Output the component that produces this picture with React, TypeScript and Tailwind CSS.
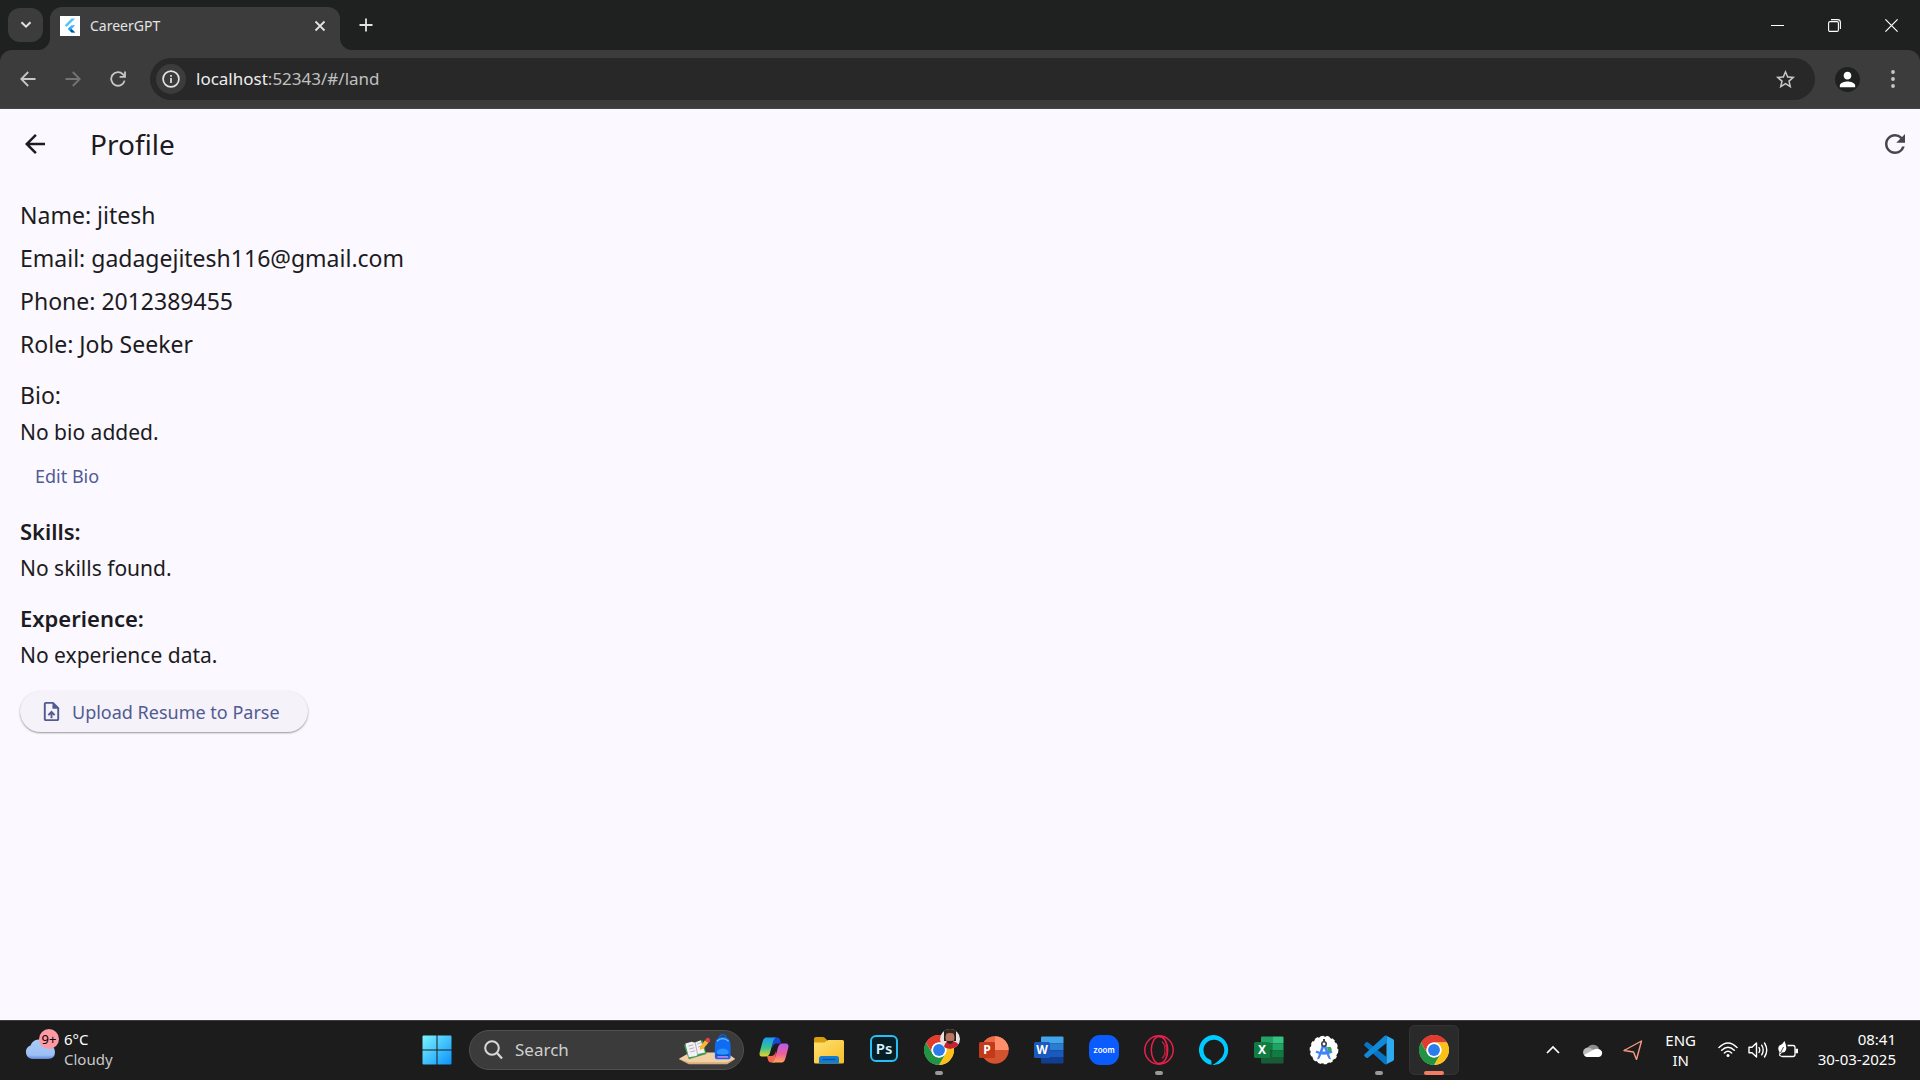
import type { ReactNode } from 'react';
import { MdArrowBack, MdPerson, MdRefresh, MdStarBorder, MdUploadFile } from 'react-icons/md';

const details = [
  { label: 'Name', value: 'jitesh' },
  { label: 'Email', value: 'gadagejitesh116@gmail.com' },
  { label: 'Phone', value: '2012389455' },
  { label: 'Role', value: 'Job Seeker' },
];

function FlutterIcon() {
  return (
    <svg width="20" height="20" viewBox="0 0 20 20" aria-hidden>
      <rect width="20" height="20" fill="#fff" />
      <path d="M11.5 2.5h3.7L6.6 11 4.8 9.2z" fill="#54c5f8" />
      <path d="M11.5 9.2h3.7L11.6 12.9l3.6 3.7h-3.7l-3.6-3.7z" fill="#40b6f5" />
      <path d="M9.8 14.7l1.8-1.8 3.6 3.7h-3.7z" fill="#01579b" />
      <path d="M7.9 12.9l1.8-1.8 1.9 1.8-1.8 1.8z" fill="#29a3ee" />
    </svg>
  );
}

function TabStrip() {
  return (
    <div className="flex h-[50px] items-end bg-[#1f2120] pl-2 text-[#e3e3e3]">
      <button type="button" aria-label="Search tabs" className="mb-2 flex h-[34px] w-[35px] items-center justify-center rounded-xl bg-[#3c3c3c]">
        <svg width="12" height="8" viewBox="0 0 12 8" fill="none" aria-hidden>
          <path d="M1.5 1.2 6 5.7l4.5-4.5" stroke="currentColor" strokeWidth="2" />
        </svg>
      </button>
      <div className="relative ml-[7px] flex h-[43px] w-[290px] items-center rounded-t-xl bg-[#3c3c3c] pr-2 pb-4 pl-[10px] pt-[10px]">
        <svg className="absolute bottom-0 -left-3 text-[#3c3c3c]" width="12" height="12" viewBox="0 0 12 12" aria-hidden>
          <path d="M12 0v12H0A12 12 0 0 0 12 0z" fill="currentColor" />
        </svg>
        <svg className="absolute -right-3 bottom-0 text-[#3c3c3c]" width="12" height="12" viewBox="0 0 12 12" aria-hidden>
          <path d="M0 0v12h12A12 12 0 0 1 0 0z" fill="currentColor" />
        </svg>
        <FlutterIcon />
        <span className="ml-[10px] flex-1 text-[14px] leading-5">CareerGPT</span>
        <button type="button" aria-label="Close tab" className="flex h-6 w-6 items-center justify-center">
          <svg width="12" height="12" viewBox="0 0 12 12" fill="none" aria-hidden>
            <path d="M1.5 1.5l9 9M10.5 1.5l-9 9" stroke="currentColor" strokeWidth="1.8" />
          </svg>
        </button>
      </div>
      <button type="button" aria-label="New tab" className="mb-[15px] ml-[14px] flex h-5 w-6 items-center justify-center">
        <svg width="14" height="14" viewBox="0 0 14 14" fill="none" aria-hidden>
          <path d="M7 .5v13M.5 7h13" stroke="currentColor" strokeWidth="1.8" />
        </svg>
      </button>
      <div className="ml-auto flex h-full text-white">
        <button type="button" aria-label="Minimize" className="flex w-[57px] items-center justify-center">
          <svg width="13" height="13" viewBox="0 0 13 13" aria-hidden>
            <path d="M0 6h13v1H0z" fill="currentColor" />
          </svg>
        </button>
        <button type="button" aria-label="Restore" className="flex w-[57px] items-center justify-center">
          <svg width="13" height="13" viewBox="0 0 13 13" fill="none" stroke="currentColor" strokeWidth="1.1" aria-hidden>
            <rect x=".6" y="2.6" width="9.8" height="9.8" rx="1.4" />
            <path d="M3 .6h6.6a2.8 2.8 0 0 1 2.8 2.8V10" />
          </svg>
        </button>
        <button type="button" aria-label="Close" className="flex w-[57px] items-center justify-center">
          <svg width="13" height="13" viewBox="0 0 13 13" fill="none" aria-hidden>
            <path d="M.4.4l12.2 12.2M12.6.4L.4 12.6" stroke="currentColor" strokeWidth="1.2" />
          </svg>
        </button>
      </div>
    </div>
  );
}

function Toolbar() {
  return (
    <div className="bg-[#1f2120]">
      <div className="flex h-[59px] items-center rounded-t-xl border-b border-[#484848] bg-[#3c3c3c] pr-4 pl-[5px] text-[#c7c7c7]">
        <button type="button" aria-label="Back" className="flex h-9 w-[45px] items-center justify-center">
          <svg width="16" height="16" viewBox="0 0 16 16" fill="none" stroke="currentColor" strokeWidth="1.8" aria-hidden>
            <path d="M15.5 8H2M8.2 1 1.3 8l6.9 7" />
          </svg>
        </button>
        <button type="button" aria-label="Forward" className="flex h-9 w-[45px] items-center justify-center text-[#747474]">
          <svg width="16" height="16" viewBox="0 0 16 16" fill="none" stroke="currentColor" strokeWidth="1.8" aria-hidden>
            <path d="M.5 8H14M7.8 1l6.9 7-6.9 7" />
          </svg>
        </button>
        <button type="button" aria-label="Reload" className="flex h-9 w-[45px] items-center justify-center">
          <svg width="16" height="16" viewBox="0 0 16 16" fill="none" stroke="currentColor" strokeWidth="1.8" aria-hidden>
            <path d="M14.6 9.6A6.8 6.8 0 1 1 13 3.3l1.8 1.9" />
            <path d="M15 .5v5.3H9.6" />
          </svg>
        </button>
        <div className="ml-[10px] flex h-[42px] flex-1 items-center rounded-full bg-[#282828] pr-[18px] pl-[6px]">
          <button type="button" aria-label="View site information" className="flex h-[30px] w-[30px] items-center justify-center rounded-full bg-[#3c3c3c] text-[#e3e3e3]">
            <svg width="18" height="18" viewBox="0 0 18 18" fill="none" aria-hidden>
              <circle cx="9" cy="9" r="7.9" stroke="currentColor" strokeWidth="1.7" />
              <path d="M9 8v5M9 5v1.8" stroke="currentColor" strokeWidth="1.7" />
            </svg>
          </button>
          <div className="ml-[10px] flex-1 text-[17px] leading-6 text-[#c0c0c0]">
            <span className="text-[#ededed]">localhost</span>:52343/#/land
          </div>
          <button type="button" aria-label="Bookmark this tab">
            <MdStarBorder size={23} />
          </button>
        </div>
        <button type="button" aria-label="Profile" className="ml-5 flex h-[25px] w-[25px] items-center justify-center rounded-full bg-[#1f2120] text-white">
          <MdPerson size={23} />
        </button>
        <button type="button" aria-label="Menu" className="ml-[22px] flex h-9 w-[22px] items-center justify-center">
          <svg width="4" height="18" viewBox="0 0 4 18" fill="currentColor" aria-hidden>
            <circle cx="2" cy="2" r="1.9" />
            <circle cx="2" cy="9" r="1.9" />
            <circle cx="2" cy="16" r="1.9" />
          </svg>
        </button>
      </div>
    </div>
  );
}

function Section({ title, text }: { title: string; text: string }) {
  return (
    <section className="mt-[18px]">
      <h2 className="text-[22px] leading-[34px] font-semibold">{title}</h2>
      <p className="mt-[5px] text-[21px] leading-[30px]">{text}</p>
    </section>
  );
}

function ProfilePage() {
  return (
    <main className="flex-1 bg-[#fbf8ff] text-[#1b1b21]">
      <header className="flex h-[70px] items-center pr-[10px] pl-5">
        <button type="button" aria-label="Back">
          <MdArrowBack size={30} />
        </button>
        <h1 className="ml-10 flex-1 text-[28px] leading-9">Profile</h1>
        <button type="button" aria-label="Refresh" className="text-[#46464f]">
          <MdRefresh size={30} />
        </button>
      </header>
      <div className="px-5 pt-[19px] pb-5">
        <div className="flex flex-col gap-[9px] text-[23px] leading-[34px]">
          {details.map((d) => (
            <p key={d.label}>
              {d.label}: {d.value}
            </p>
          ))}
        </div>
        <section className="mt-[17px]">
          <h2 className="text-[23px] leading-[34px]">Bio:</h2>
          <p className="mt-[5px] text-[21px] leading-[30px]">No bio added.</p>
          <button type="button" className="mt-2 block h-[41px] px-[15px] text-[18px] leading-6 text-[#505b92]">
            Edit Bio
          </button>
        </section>
        <Section title="Skills:" text="No skills found." />
        <Section title="Experience:" text="No experience data." />
        <button
          type="button"
          className="mt-[21px] flex h-[41px] items-center gap-[9px] rounded-full bg-[#f5f2fa] pr-7 pl-5 text-[18px] leading-6 text-[#505b92] shadow-[0_1px_2px_rgba(0,0,0,0.4)]"
        >
          <MdUploadFile size={23} />
          Upload Resume to Parse
        </button>
      </div>
    </main>
  );
}

function WindowsIcon() {
  return (
    <svg width="30" height="30" viewBox="0 0 30 30" aria-hidden>
      <defs>
        <linearGradient id="win" x1="0" y1="0" x2="1" y2="1">
          <stop offset="0" stopColor="#7df3ff" />
          <stop offset="1" stopColor="#0a93fb" />
        </linearGradient>
      </defs>
      <path d="M1.5.5h13v14h-14v-13a1 1 0 0 1 1-1zM15.5.5h13a1 1 0 0 1 1 1v13h-14zM.5 15.5h14v14h-13a1 1 0 0 1-1-1zM15.5 15.5h14v13a1 1 0 0 1-1 1h-13z" fill="url(#win)" />
    </svg>
  );
}

function StudyArt() {
  return (
    <svg width="57" height="32" viewBox="0 0 58 32" aria-hidden>
      <path d="M0 25.500 11 19h37l9 6.500-8 5H10z" fill="#d9ae7e" />
      <path d="M0 25 11 18.500h37l9 6.500-8 3.500H10z" fill="#f2cfa4" />
      <path d="M5 11l19-5 4 14-18 5.500z" fill="#3f9a55" />
      <path d="M6.500 9.500 13 7.500l3 1 6-2.500 4.500 12.500-7 1.500-2 2-7.500 1.500z" fill="#f4f1f5" />
      <path d="M16.500 8.500 19 21M9.500 12l5-1.300M10.500 15l5-1.300M11.500 18l5-1.300M18.500 10l4-1.500M19.500 13l4-1.500" stroke="#a9a7b2" strokeWidth=".9" />
      <path d="m21.500 12.500 5-6.500 3.500 2.500-5 6-4 1.500z" fill="#f7b731" />
      <path d="m26.500 6 2-2.500q3.500 0 3 3.500L30 8.500z" fill="#e8414d" />
      <path d="M41 4.500q0-4 3.500-4t3.500 4" fill="none" stroke="#1260c8" strokeWidth="1.500" />
      <path d="M36.500 12q0-9.500 8-9.500t8 9.500v11q0 2.500-3 2.500h-10q-3 0-3-2.500z" fill="#0f6cf0" />
      <path d="M38.500 7q6-5 12 0" fill="none" stroke="#6ec2ff" strokeWidth="1.300" />
      <path d="M38 20q0-5 6.500-5t6.500 5v2q0 1.500-2 1.500h-9q-2 0-2-1.500z" fill="#0b50cc" />
      <path d="M38.500 17q6-5 12 0v3q-6 1.500-12 0z" fill="#2794ff" />
      <path d="M39 23h11" stroke="#ca7df5" strokeWidth="1.700" />
    </svg>
  );
}

function CopilotIcon() {
  return (
    <svg width="30" height="28" viewBox="0 0 30 28" aria-hidden>
      <defs>
        <linearGradient id="copA" x1="0" y1="0" x2="0" y2="1">
          <stop offset="0" stopColor="#1b9bf5" />
          <stop offset=".55" stopColor="#38c48f" />
          <stop offset="1" stopColor="#f2cf2b" />
        </linearGradient>
        <linearGradient id="copB" x1="0" y1="0" x2="0" y2="1">
          <stop offset="0" stopColor="#b35cf2" />
          <stop offset=".55" stopColor="#ee5f97" />
          <stop offset="1" stopColor="#ffa65c" />
        </linearGradient>
      </defs>
      <path d="M14 1.500h3.500c3.500 0 3.500 2 4.500 6h-4c-3 0-4 2-5 5z" fill="#1748d8" />
      <path d="M16 26.500h-4c-3 0-3-3-4-6.500h4c3 0 4-2 5-5z" fill="#f26a4d" />
      <path d="M8 1.500h10c-3 0-3.500 2.500-4.300 5.500l-2.500 9c-.8 3-2 4.500-4.700 4.500H3.800c-3 0-3.800-1.500-3-4.500l2.500-9.500C4.200 3.500 5 1.500 8 1.500z" fill="url(#copA)" />
      <path d="M22 26.500H12c3 0 3.500-2.500 4.300-5.500l2.500-9c.8-3 2-4.500 4.700-4.500h2.700c3 0 3.800 1.500 3 4.500l-2.500 9.500c-.9 3-1.700 5-4.700 5z" fill="url(#copB)" />
    </svg>
  );
}

function ExplorerIcon() {
  return (
    <svg width="30" height="28" viewBox="0 0 30 28" aria-hidden>
      <defs>
        <linearGradient id="folder" x1="0" y1="0" x2="1" y2="1">
          <stop offset="0" stopColor="#ffe173" />
          <stop offset="1" stopColor="#f9bd27" />
        </linearGradient>
      </defs>
      <path d="M0 3q0-2 2-2h7q1.500 0 2.500 1.500L13 4v8H0z" fill="#dc9d0c" />
      <path d="M0 6.500h10.500L14 4h14.500Q30 4 30 5.500V26q0 1.500-1.500 1.500h-27Q0 27.500 0 26z" fill="url(#folder)" />
      <path d="M5 27.500v-5Q5 20 7.500 20h15q2.500 0 2.500 2.500v5z" fill="#147bd3" />
      <path d="M8.500 23.500h13" stroke="#07529e" strokeWidth="1.200" />
    </svg>
  );
}

function ChromeIcon() {
  return (
    <svg width="30" height="30" viewBox="0 0 48 48" aria-hidden>
      <circle cx="24" cy="24" r="23.500" fill="#fff" />
      <path d="M3.200 12A24 24 0 0 1 44.800 12H24a12 12 0 0 0-10.400 18z" fill="#e33b2e" />
      <path d="M44.800 12A24 24 0 0 1 24 48l10.400-18A12 12 0 0 0 34.400 18 12 12 0 0 0 24 12z" fill="#fbc116" />
      <path d="M24 48A24 24 0 0 1 3.200 12l10.400 18A12 12 0 0 0 34.400 30z" fill="#229342" />
      <circle cx="24" cy="24" r="12" fill="#fff" />
      <circle cx="24" cy="24" r="9.500" fill="#2b7de9" />
    </svg>
  );
}

function ChromeProfileIcon() {
  return (
    <span className="relative">
      <ChromeIcon />
      <svg className="absolute -top-[6px] left-4" width="20" height="20" viewBox="0 0 20 20" aria-hidden>
        <defs>
          <clipPath id="face">
            <circle cx="10" cy="10" r="10" />
          </clipPath>
        </defs>
        <g clipPath="url(#face)">
          <path fill="#e8e2e2" d="M0 0h20v20H0z" />
          <path d="M4 0h12v12H4z" fill="#251c1c" />
          <path d="M4 20q0-8 6-8t8 3v5z" fill="#c8202c" />
          <ellipse cx="10" cy="8.500" rx="4.500" ry="6.500" fill="#b87763" />
          <path d="M5.500 5q0-4.500 4.500-4.500T15 5q-5-2-9.500 0zM6.500 11.500q3.500 1 7 0-.5 3.500-3.500 3.500t-3.500-3.500z" fill="#3a2420" />
        </g>
      </svg>
    </span>
  );
}

function PhotoshopIcon() {
  return (
    <span className="mb-[2px] flex h-[27px] w-7 items-center justify-center rounded-md border-2 border-[#26c0f5] bg-[#061e26] pb-[2px] text-[15px] leading-5 font-semibold text-[#d8f3fd]">
      Ps
    </span>
  );
}

function PowerPointIcon() {
  return (
    <span className="relative flex">
      <svg width="30" height="28" viewBox="0 0 30 28" aria-hidden>
        <circle cx="16" cy="14" r="13.700" fill="#d35230" />
        <path d="M16 .3A13.700 13.700 0 0 0 2.300 14H16z" fill="#ed6c47" />
        <path d="M16 .3A13.700 13.700 0 0 1 29.700 14H16z" fill="#ff8f6b" />
        <rect x="0" y="6" width="16" height="16" rx="1.500" fill="#c13b1b" />
      </svg>
      <span className="absolute top-[6px] left-0 w-4 text-center text-[12px] leading-4 font-bold text-white">P</span>
    </span>
  );
}

function WordIcon() {
  return (
    <span className="relative flex">
      <svg width="30" height="28" viewBox="0 0 30 28" aria-hidden>
        <path d="M7 1.500Q7 .5 8 .5h20.500q1 0 1 1V7.500H7z" fill="#41a5ee" />
        <path d="M7 7.500h22.500v6.700H7z" fill="#2b7cd3" />
        <path d="M7 14.200h22.500V21H7z" fill="#185abd" />
        <path d="M7 21h22.500v5.500q0 1-1 1H8q-1 0-1-1z" fill="#103f91" />
        <rect x="0" y="6" width="16" height="16" rx="1.500" fill="#185abd" />
      </svg>
      <span className="absolute top-[6px] left-0 w-4 text-center text-[12px] leading-4 font-bold text-white">W</span>
    </span>
  );
}

function ExcelIcon() {
  return (
    <span className="relative flex">
      <svg width="30" height="28" viewBox="0 0 30 28" aria-hidden>
        <path d="M7 1.500Q7 .5 8 .5h10.300v7H7z" fill="#21a366" />
        <path d="M18.300.5h10.200q1 0 1 1v6H18.300z" fill="#33c481" />
        <path d="M7 7.500h11.300v6.700H7z" fill="#107c41" />
        <path d="M18.300 7.500h11.200v6.700H18.300z" fill="#21a366" />
        <path d="M7 14.200h22.500v12.300q0 1-1 1H8q-1 0-1-1z" fill="#185c37" />
        <path d="M18.300 14.200h11.200V21H18.300z" fill="#107c41" />
        <rect x="0" y="6" width="16" height="16" rx="1.500" fill="#107c41" />
      </svg>
      <span className="absolute top-[6px] left-0 w-4 text-center text-[12px] leading-4 font-bold text-white">X</span>
    </span>
  );
}

function ZoomIcon() {
  return (
    <span className="flex h-[30px] w-[30px] items-center justify-center rounded-[11px] bg-[#0b5cff] font-['Inter'] text-[8px] leading-3 font-semibold text-white">
      zoom
    </span>
  );
}

function OperaIcon() {
  return (
    <svg width="30" height="30" viewBox="0 0 30 30" fill="none" stroke="#e8204b" aria-hidden>
      <circle cx="15" cy="15" r="14.200" strokeWidth="1.500" />
      <ellipse cx="15.500" cy="15" rx="8.200" ry="13.700" strokeWidth="1.500" />
      <path d="M13 1.500q10 0 10.500 13.500T13 28.500" strokeWidth="1" />
      <path d="M18 6.500q4.500 3 4.500 8.500T18 23.500q3-3 3-8.500t-3-8.500z" strokeWidth=".8" />
    </svg>
  );
}

function AlexaIcon() {
  return (
    <svg width="30" height="30" viewBox="0 0 30 30" aria-hidden>
      <path
        fillRule="evenodd"
        d="M15 0a15 15 0 0 0-2.500 29.800v-3c0-1.300-.7-1.700-1.800-2.200A10.500 10.500 0 0 1 4.500 15C4.500 9.200 9.200 4.800 15 4.800S25.300 9.500 25.300 15c0 7-6 11.500-12 15A15 15 0 1 0 15 0z"
        fill="#00caff"
      />
    </svg>
  );
}

function AndroidStudioIcon() {
  return (
    <svg width="30" height="30" viewBox="0 0 30 30" aria-hidden>
      <circle cx="15" cy="15" r="13.600" fill="#fff" stroke="#fff" strokeWidth="1.500" strokeDasharray="3.500 2.500" />
      <path d="M18 12h3.500q2 2 .5 5l-3 .5z" fill="#34a853" />
      <path d="M13 10 8 24.500l2.500-1L12.500 19h5l2 4.500 2.500 1L17 10zM15 12.500l1.500 4h-3z" fill="#4285f4" fillRule="evenodd" />
      <path d="M7 16.500q8 4.500 16 0" fill="none" stroke="#4285f4" strokeWidth="2.200" />
      <path d="M14 4h2v3h-2z" fill="#3c4043" />
      <circle cx="15" cy="9" r="2.200" fill="#fff" stroke="#3c4043" strokeWidth="1.600" />
    </svg>
  );
}

function VsCodeIcon() {
  return (
    <svg width="30" height="30" viewBox="0 0 100 100" aria-hidden>
      <path d="M2 29 7 24q3-2 6 0l62 49v25q-5 1-8-2L2 36q-3-3 0-7z" fill="#0a74c4" />
      <path d="M2 71 7 76q3 2 6 0l62-49V2q-5-1-8 2L2 64q-3 3 0 7z" fill="#1089d8" />
      <path d="m71 99 25-12q4-2 4-6V19q0-4-4-6L71 1q4 1 4 6v86q0 5-4 6z" fill="#2cabf3" />
    </svg>
  );
}

type AppState = 'idle' | 'open' | 'active';

const pinned: { name: string; icon: ReactNode; state: AppState }[] = [
  { name: 'Copilot', icon: <CopilotIcon />, state: 'idle' },
  { name: 'File Explorer', icon: <ExplorerIcon />, state: 'idle' },
  { name: 'Photoshop', icon: <PhotoshopIcon />, state: 'idle' },
  { name: 'Chrome profile', icon: <ChromeProfileIcon />, state: 'open' },
  { name: 'PowerPoint', icon: <PowerPointIcon />, state: 'idle' },
  { name: 'Word', icon: <WordIcon />, state: 'idle' },
  { name: 'Zoom', icon: <ZoomIcon />, state: 'idle' },
  { name: 'Opera GX', icon: <OperaIcon />, state: 'open' },
  { name: 'Alexa', icon: <AlexaIcon />, state: 'idle' },
  { name: 'Excel', icon: <ExcelIcon />, state: 'idle' },
  { name: 'Android Studio', icon: <AndroidStudioIcon />, state: 'idle' },
  { name: 'Visual Studio Code', icon: <VsCodeIcon />, state: 'open' },
  { name: 'Chrome', icon: <ChromeIcon />, state: 'active' },
];

const cellStyles: Record<AppState, string> = {
  idle: '',
  open: '',
  active: 'rounded-md bg-[#2a2a2a] ring-1 ring-inset ring-[#333333]',
};

const markStyles: Record<AppState, string> = {
  idle: 'hidden',
  open: 'w-2 bg-[#999999]',
  active: 'w-5 bg-[#f47c62]',
};

function Weather() {
  return (
    <button type="button" className="flex items-center pl-[25px] text-left text-[15px] leading-5 text-white">
      <span className="relative flex h-10 w-[30px] items-end pb-[11px]">
        <svg width="30" height="20" viewBox="0 0 30 20" aria-hidden>
          <defs>
            <linearGradient id="cloud" x1="0" y1="0" x2="0" y2="1">
              <stop offset="0" stopColor="#a8cbf8" />
              <stop offset=".8" stopColor="#9dbff5" />
              <stop offset="1" stopColor="#5d87d8" />
            </linearGradient>
          </defs>
          <path d="M7 20a7 7 0 0 1-1.500-13.500A9 9 0 0 1 22 5.500 7.500 7.500 0 0 1 30 13q0 7-7 7z" fill="url(#cloud)" />
        </svg>
        <span className="absolute -top-[1px] left-[14px] flex h-5 w-5 items-center justify-center rounded-full bg-[#ff99a4] text-[13px] leading-4 text-black">
          9+
        </span>
      </span>
      <span className="ml-[9px] pb-[2px]">
        <span className="block">6°C</span>
        <span className="block text-[#c8c8c8]">Cloudy</span>
      </span>
    </button>
  );
}

function Tray() {
  return (
    <div className="ml-auto flex items-center pr-6 text-white">
      <button type="button" aria-label="Show hidden icons" className="flex w-10 justify-center">
        <svg width="14" height="9" viewBox="0 0 14 9" fill="none" aria-hidden>
          <path d="M1 8l6-6 6 6" stroke="currentColor" strokeWidth="1.700" />
        </svg>
      </button>
      <button type="button" aria-label="OneDrive" className="flex w-10 justify-center">
        <svg width="20" height="14" viewBox="0 0 20 14" aria-hidden>
          <path d="M4 6a6.500 6.500 0 0 1 12-.5L10 9z" fill="#8d8d8d" />
          <path d="M0 9.500a5 5 0 0 1 8-4l8 4-5 3.500H4A4 4 0 0 1 0 9.500z" fill="#bdbdbd" />
          <path d="M1 12l10-5.500q3-1.500 6 0A4 4 0 0 1 16 14H4q-2 0-3-2z" fill="#fff" />
        </svg>
      </button>
      <button type="button" aria-label="Location" className="flex w-10 justify-center">
        <svg width="20" height="20" viewBox="0 0 20 20" fill="none" aria-hidden>
          <path d="M18.500 1 1 10.500l9.500 1.500 3 7.500z" stroke="#f59a80" strokeWidth="1.400" strokeLinejoin="round" />
        </svg>
      </button>
      <button type="button" className="w-14 text-center text-[15px] leading-5">
        <span className="block">ENG</span>
        <span className="block">IN</span>
      </button>
      <button type="button" aria-label="Network, volume and battery" className="ml-[9px] flex w-20 items-center gap-[10px]">
        <svg width="20" height="16" viewBox="0 0 20 16" fill="none" stroke="currentColor" strokeWidth="1.500" strokeLinecap="round" aria-hidden>
          <path d="M1 5.500q9-9 18 0M3.700 8.300q6.300-6.200 12.600 0M6.400 11q3.600-3.500 7.200 0" />
          <circle cx="10" cy="13.500" r="1.500" fill="currentColor" stroke="none" />
        </svg>
        <svg width="20" height="18" viewBox="0 0 20 18" fill="none" stroke="currentColor" strokeWidth="1.400" strokeLinecap="round" aria-hidden>
          <path d="M1 6.300h3L8.500 2v14L4 11.700H1z" strokeLinejoin="round" />
          <path d="M11 6.500q1.500 2.500 0 5M13.700 4.200q3 4.800 0 9.600M16.500 2q4.500 7 0 14" />
        </svg>
        <svg width="20" height="18" viewBox="0 0 20 18" fill="none" stroke="currentColor" strokeWidth="1.300" aria-hidden>
          <path d="M9.500 4.500H15q2 0 2 2v7q0 2-2 2H4.500q-2 0-3-1.500" />
          <path d="M18 8.500h1.500v3H18z" fill="currentColor" />
          <path d="M6.500 0q2.500 5 1.500 9-1 3-4 2.500L1 15l.5-4Q-1 7 1.500 4.500 5 3 6.500 0z" fill="currentColor" stroke="none" />
          <path d="M5.500 6 2.500 12" stroke="#1c1c1c" strokeWidth=".8" />
        </svg>
      </button>
      <button type="button" className="ml-5 pb-[2px] text-right text-[15px] leading-5">
        <span className="block">08:41</span>
        <span className="block">30-03-2025</span>
      </button>
    </div>
  );
}

function Taskbar() {
  return (
    <footer className="flex h-[60px] items-stretch border-t border-[#3d3d3d] bg-[#1c1c1c] pb-[2px]">
      <div className="flex w-[412px] items-center">
        <Weather />
      </div>
      <div className="flex items-center gap-[5px]">
        <button type="button" aria-label="Start" className="flex h-[50px] w-[50px] items-center justify-center">
          <WindowsIcon />
        </button>
        <label className="ml-[2px] flex h-10 w-[275px] items-center rounded-full border border-[#505050] bg-[#3b3b3b] pr-[7px] pl-[14px] text-[#d8d8d8]">
          <svg width="19" height="20" viewBox="0 0 19 20" fill="none" aria-hidden>
            <circle cx="8" cy="8" r="6.800" stroke="currentColor" strokeWidth="2" />
            <path d="m13 13 5 5.500" stroke="currentColor" strokeWidth="2.300" />
          </svg>
          <input
            type="text"
            placeholder="Search"
            aria-label="Search"
            className="ml-3 min-w-0 flex-1 bg-transparent text-[17px] leading-6 outline-none placeholder:text-[#cfcfcf]"
          />
          <StudyArt />
        </label>
        {pinned.map((app) => (
          <button
            key={app.name}
            type="button"
            aria-label={app.name}
            className={`relative flex h-[50px] w-[50px] items-center justify-center ${cellStyles[app.state]}`}
          >
            {app.icon}
            <span className={`absolute bottom-0 h-1 rounded-full ${markStyles[app.state]}`} />
          </button>
        ))}
      </div>
      <Tray />
    </footer>
  );
}

export default function App() {
  return (
    <div className="flex min-h-screen flex-col font-['Noto_Sans',sans-serif]">
      <TabStrip />
      <Toolbar />
      <ProfilePage />
      <Taskbar />
    </div>
  );
}
